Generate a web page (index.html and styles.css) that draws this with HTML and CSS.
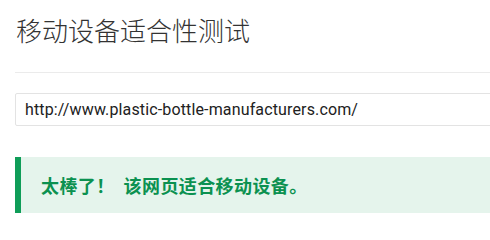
FILE: index.html
```html
<!DOCTYPE html>
<html lang="zh-CN">
<head>
<meta charset="utf-8">
<title>移动设备适合性测试</title>
<link rel="stylesheet" href="styles.css">
</head>
<body>
<div class="page">
  <header class="header">
    <h1 class="title">移动设备适合性测试</h1>
  </header>
  <div class="url-box">http://www.plastic-bottle-manufacturers.com/</div>
  <div class="result">
    <span class="result-lead">太棒了！</span>
    <span class="result-text">该网页适合移动设备。</span>
  </div>
</div>
</body>
</html>
```

FILE: styles.css
```css
html, body {
  margin: 0;
  padding: 0;
  background: #ffffff;
  overflow: hidden;
}

.page {
  width: 640px;
  padding: 0 15px;
  font-family: "Noto Sans CJK SC", "Noto Sans", sans-serif;
}

.header {
  padding-top: 12px;
  padding-bottom: 24px;
  border-bottom: 1px solid #ebebeb;
}

.title {
  margin: 0;
  font-size: 26px;
  line-height: 36px;
  font-weight: 300;
  color: #333333;
  padding-left: 1px;
}

.url-box {
  margin-top: 20px;
  height: 31px;
  border: 1px solid #e3e3e3;
  border-radius: 2px;
  padding: 0 9px;
  display: flex;
  align-items: center;
  font-family: Roboto, "Liberation Sans", sans-serif;
  font-size: 16px;
  letter-spacing: 0.14px;
  color: #212121;
}

.result {
  margin-top: 31px;
  height: 56px;
  border-left: 6px solid #0f9d58;
  background: #e5f4ec;
  display: flex;
  align-items: center;
  gap: 9px;
  padding-left: 20px;
  font-size: 18px;
  font-weight: 700;
  letter-spacing: 0.4px;
  color: #0b9150;
}

.result-lead,
.result-text {
  white-space: nowrap;
  flex: none;
}
```
